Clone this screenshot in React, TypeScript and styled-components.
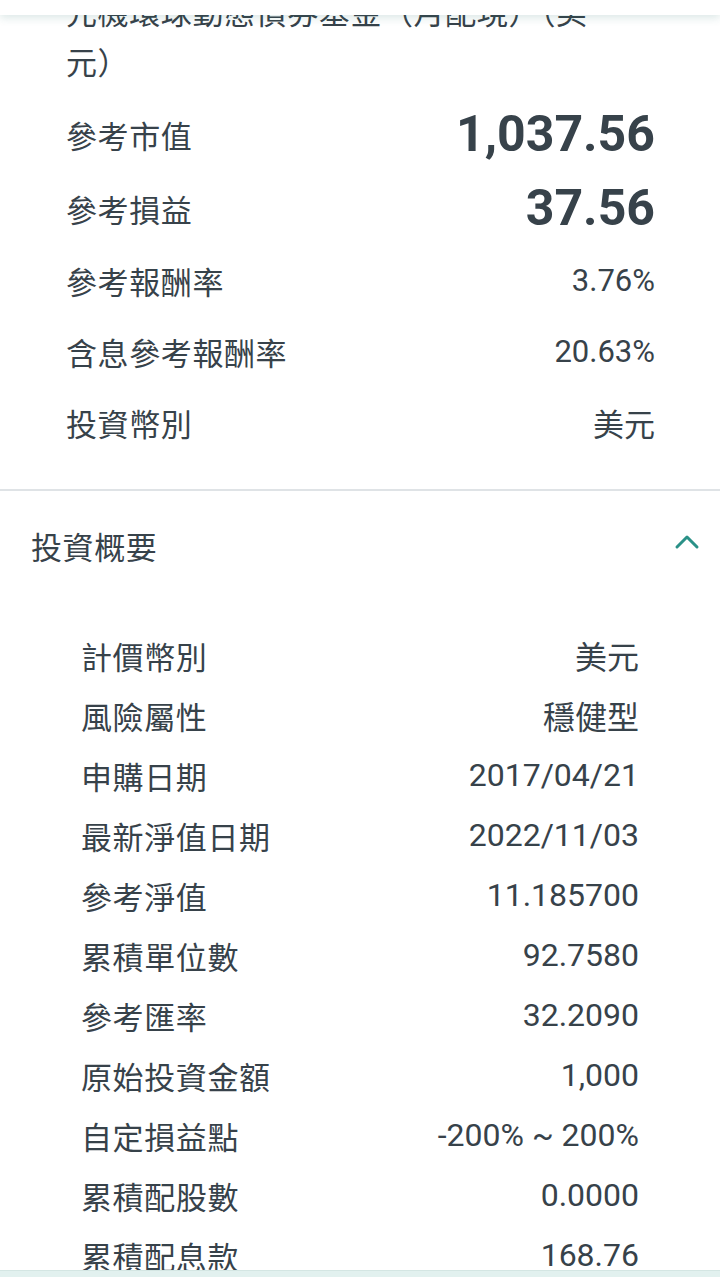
import { createGlobalStyle, styled } from 'styled-components';

const GlobalStyle = createGlobalStyle`
  body {
    margin: 0;
    background: #ffffff;
    font-family: Roboto, "Noto Sans CJK TC", "Noto Sans", sans-serif;
    color: #37424a;
  }
`

const TopBar = styled.div`
  position: fixed;
  top: 0;
  left: 0;
  right: 0;
  height: 15px;
  background: #ffffff;
  box-shadow: 0 3px 8px rgba(40, 110, 105, 0.16);
  z-index: 2;
`

const BottomBar = styled.div`
  position: fixed;
  left: 0;
  right: 0;
  bottom: 0;
  height: 6px;
  background: #e2f1ef;
  border-top: 1px solid #d4e6e3;
  z-index: 2;
`

const Page = styled.div`
  overflow: hidden;
  height: 1277px;
`

const Summary = styled.section`
  padding: 0 65px 31px 66px;
  border-bottom: 2px solid #dfe3e6;
`

const FundName = styled.div`
  margin-top: -14px;
  margin-bottom: 11px;
  max-width: 552px;
  font-family: "Noto Sans CJK TC", sans-serif;
  font-size: 31px;
  letter-spacing: 0.6px;
  line-height: 50px;
  word-spacing: 10px;
`

const SummaryRow = styled.div<{ $big?: boolean }>`
  display: flex;
  align-items: center;
  justify-content: space-between;
  height: ${(p) => (p.$big ? '74px' : '71px')};
`

const Label = styled.span`
  font-size: 31px;
  letter-spacing: 0.6px;
`

const Value = styled.span<{ $big?: boolean }>`
  font-size: ${(p) => (p.$big ? '50px' : '31px')};
  font-weight: ${(p) => (p.$big ? 700 : 400)};
`

const SectionHeader = styled.div`
  display: flex;
  align-items: center;
  justify-content: space-between;
  height: 108px;
  padding: 0 20px 0 31px;
`

const SectionTitle = styled.span`
  font-size: 31px;
  letter-spacing: 0.6px;
`

const Chevron = styled.svg`
  margin-bottom: 6px;
`

const DetailList = styled.div`
  padding: 26px 81px 0 81px;
`

const DetailRow = styled.div`
  display: flex;
  align-items: center;
  justify-content: space-between;
  height: 60px;
`

const DetailValue = styled.span`
  font-size: 32px;
`

const ChevronUp = () => (
  <Chevron width="26" height="18" viewBox="0 0 26 18">
    <polyline points="3,14 13,4 23,14" fill="none" stroke="#2a9187" strokeWidth="3" strokeLinecap="round" strokeLinejoin="round" />
  </Chevron>
)

const summary = [
  { label: '參考市值', value: '1,037.56', big: true },
  { label: '參考損益', value: '37.56', big: true },
  { label: '參考報酬率', value: '3.76%' },
  { label: '含息參考報酬率', value: '20.63%' },
  { label: '投資幣別', value: '美元' },
]

const details = [
  ['計價幣別', '美元'],
  ['風險屬性', '穩健型'],
  ['申購日期', '2017/04/21'],
  ['最新淨值日期', '2022/11/03'],
  ['參考淨值', '11.185700'],
  ['累積單位數', '92.7580'],
  ['參考匯率', '32.2090'],
  ['原始投資金額', '1,000'],
  ['自定損益點', '-200% ~ 200%'],
  ['累積配股數', '0.0000'],
  ['累積配息款', '168.76'],
]

const App = () => {
  return (
    <>
      <GlobalStyle />
      <TopBar />
      <Page>
        <Summary>
          <FundName>元機環球動態債券基金（月配現）（美元）</FundName>
          {summary.map((item) => (
            <SummaryRow key={item.label} $big={item.big}>
              <Label>{item.label}</Label>
              <Value $big={item.big}>{item.value}</Value>
            </SummaryRow>
          ))}
        </Summary>
        <SectionHeader>
          <SectionTitle>投資概要</SectionTitle>
          <ChevronUp />
        </SectionHeader>
        <DetailList>
          {details.map(([k, v]) => (
            <DetailRow key={k}>
              <Label>{k}</Label>
              <DetailValue>{v}</DetailValue>
            </DetailRow>
          ))}
        </DetailList>
      </Page>
      <BottomBar />
    </>
  )
}

export default App;
